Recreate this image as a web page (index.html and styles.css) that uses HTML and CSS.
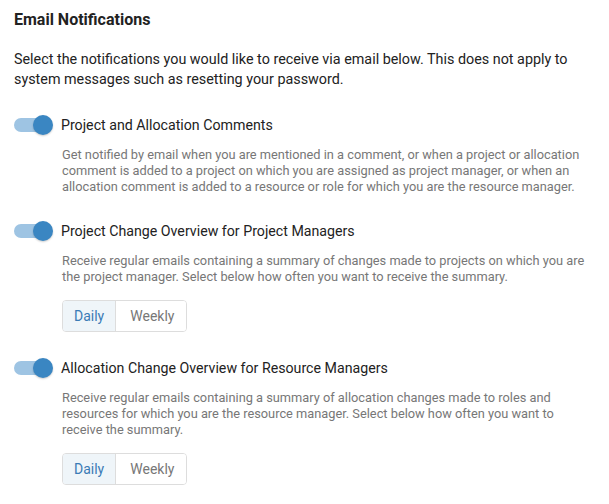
FILE: index.html
```html
<!DOCTYPE html>
<html lang="en">
<head>
    <meta charset="UTF-8">
    <meta name="viewport" content="width=device-width, initial-scale=1.0">
    <title>Email Notifications</title>
    <link rel="stylesheet" href="styles.css">
</head>
<body>
    <div class="settings">
        <h2 class="settings-title">Email Notifications</h2>
        <p class="settings-intro">Select the notifications you would like to receive via email below. This does not apply to<br>system messages such as resetting your password.</p>

        <!-- Comments -->
        <div class="setting">
            <div class="setting-head">
                <span class="toggle on"><span class="knob"></span></span>
                <span class="setting-label">Project and Allocation Comments</span>
            </div>
            <p class="setting-desc">Get notified by email when you are mentioned in a comment, or when a project or allocation<br>comment is added to a project on which you are assigned as project manager, or when an<br>allocation comment is added to a resource or role for which you are the resource manager.</p>
        </div>

        <!-- Project managers -->
        <div class="setting">
            <div class="setting-head">
                <span class="toggle on"><span class="knob"></span></span>
                <span class="setting-label">Project Change Overview for Project Managers</span>
            </div>
            <p class="setting-desc">Receive regular emails containing a summary of changes made to projects on which you are<br>the project manager. Select below how often you want to receive the summary.</p>
            <div class="btn-group">
                <button class="seg-btn active">Daily</button>
                <button class="seg-btn">Weekly</button>
            </div>
        </div>

        <!-- Resource managers -->
        <div class="setting">
            <div class="setting-head">
                <span class="toggle on"><span class="knob"></span></span>
                <span class="setting-label">Allocation Change Overview for Resource Managers</span>
            </div>
            <p class="setting-desc">Receive regular emails containing a summary of allocation changes made to roles and<br>resources for which you are the resource manager. Select below how often you want to<br>receive the summary.</p>
            <div class="btn-group">
                <button class="seg-btn active">Daily</button>
                <button class="seg-btn">Weekly</button>
            </div>
        </div>
    </div>
</body>
</html>
```

FILE: styles.css
```css
* {
    margin: 0;
    padding: 0;
    box-sizing: border-box;
    font-family: Roboto, "Liberation Sans", sans-serif;
}

body {
    background-color: #fff;
    color: #222;
}

.settings {
    padding: 10px 14px;
    width: 609px;
}

.settings-title {
    font-size: 16px;
    font-weight: 700;
    line-height: 20px;
    color: #222;
    margin-bottom: 20px;
}

.settings-intro {
    font-size: 14.35px;
    line-height: 20px;
    color: #222;
    margin-bottom: 25px;
    white-space: nowrap;
}

.setting {
    margin-bottom: 26px;
}

.setting-head {
    display: flex;
    align-items: center;
    height: 20px;
    margin-bottom: 12px;
}

.toggle {
    position: relative;
    width: 36px;
    height: 14px;
    border-radius: 7px;
    background-color: #9ec4e3;
    margin-right: 11px;
    flex-shrink: 0;
}

.toggle .knob {
    position: absolute;
    top: -3px;
    right: -3px;
    width: 20px;
    height: 20px;
    border-radius: 50%;
    background-color: #3a86c2;
    box-shadow: 0 1px 2px rgba(0, 0, 0, 0.2);
}

.setting-label {
    font-size: 14.2px;
    color: #222;
}

.setting-desc {
    font-size: 12.8px;
    line-height: 16px;
    color: #777;
    margin-left: 48px;
    white-space: nowrap;
}

.btn-group {
    display: inline-flex;
    margin: 15px 0 0 48px;
    border: 1px solid #ddd;
    border-radius: 4px;
    overflow: hidden;
}

.seg-btn {
    border: none;
    background-color: #fff;
    color: #777;
    font-size: 14px;
    height: 30px;
    padding: 0 11px;
    cursor: pointer;
}

.seg-btn + .seg-btn {
    border-left: 1px solid #ddd;
    padding: 0 12px 0 14px;
}

.seg-btn.active {
    background-color: #eff5f9;
    color: #3b7bb6;
}
```
